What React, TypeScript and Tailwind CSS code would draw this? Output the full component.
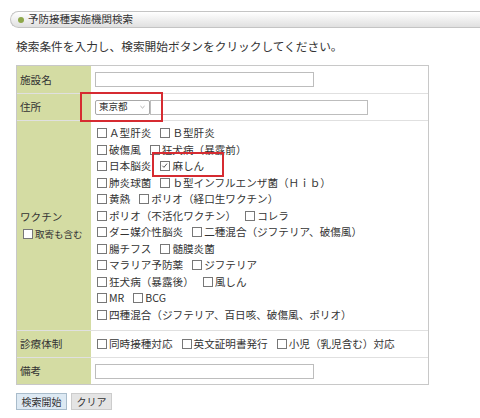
import React from "react";

const Box = ({ checked }: { checked?: boolean }) => (
  <span className="relative inline-block w-[10px] h-[10px] border border-[#777] bg-white mr-[2px] shrink-0">
    {checked && (
      <svg viewBox="0 0 9 9" className="absolute left-0 top-0 w-[8px] h-[8px]">
        <path d="M1.5 4.2 L3.3 6 L6.8 1.8" fill="none" stroke="#444" strokeWidth="1" />
      </svg>
    )}
  </span>
);

const Item = ({ label, checked }: { label: string; checked?: boolean }) => (
  <span className="inline-flex items-center whitespace-nowrap mr-[9px]">
    <Box checked={checked} />
    {label}
  </span>
);

const lines: { label: string; checked?: boolean }[][] = [
  [{ label: "Ａ型肝炎" }, { label: "Ｂ型肝炎" }],
  [{ label: "破傷風" }, { label: "狂犬病（暴露前）" }],
  [{ label: "日本脳炎" }, { label: "麻しん", checked: true }],
  [{ label: "肺炎球菌" }, { label: "ｂ型インフルエンザ菌（Ｈｉｂ）" }],
  [{ label: "黄熱" }, { label: "ポリオ（経口生ワクチン）" }],
  [{ label: "ポリオ（不活化ワクチン）" }, { label: "コレラ" }],
  [{ label: "ダニ媒介性脳炎" }, { label: "二種混合（ジフテリア、破傷風）" }],
  [{ label: "腸チフス" }, { label: "髄膜炎菌" }],
  [{ label: "マラリア予防薬" }, { label: "ジフテリア" }],
  [{ label: "狂犬病（暴露後）" }, { label: "風しん" }],
  [{ label: "MR" }, { label: "BCG" }],
  [{ label: "四種混合（ジフテリア、百日咳、破傷風、ポリオ）" }],
];

export default function App() {
  return (
    <div className="relative w-[480px] h-[418px] overflow-hidden bg-white text-[#333] font-['Noto_Sans_CJK_JP','Noto_Sans',sans-serif]">
      <div className="pt-[11px] pl-[10px]">
        <div className="h-[17px] rounded-l-[9px] border border-r-0 border-[#c4c4c4] bg-gradient-to-b from-white to-[#e0e0e0] flex items-center pl-[7px] gap-[4px]">
          <span className="w-[6px] h-[6px] rounded-full bg-[#8ea84a]" />
          <span className="text-[10.5px] leading-none">予防接種実施機関検索</span>
        </div>
      </div>

      <p className="mt-[11px] ml-[16px] text-[11.7px] leading-[14px]">
        検索条件を入力し、検索開始ボタンをクリックしてください。
      </p>

      <div className="mt-[12px] ml-[16px] w-[413px] border border-[#c8c8c8] text-[10.6px]">
        <div className="flex h-[28px] border-b border-[#e0e0e0]">
          <div className="w-[74px] bg-[#d4dca3] flex items-center pl-[3px]">施設名</div>
          <div className="flex-1 flex items-center pl-[4px]">
            <div className="w-[219px] h-[15px] border border-[#bdbdbd] bg-white" />
          </div>
        </div>
        <div className="flex h-[27px] border-b border-[#e0e0e0]">
          <div className="w-[74px] bg-[#d4dca3] flex items-center pl-[3px]">住所</div>
          <div className="flex-1 flex items-center pl-[4px]">
            <div className="w-[55px] h-[15px] border border-[#a8a8a8] rounded-[2px] bg-white flex items-center justify-between pl-[3px] pr-[4px] text-[9.5px] leading-none">
              <span>東京都</span>
              <svg viewBox="0 0 6 4" className="w-[5px] h-[4px]">
                <path d="M0.5 0.8 L3 3.2 L5.5 0.8" fill="none" stroke="#888" strokeWidth="0.8" />
              </svg>
            </div>
            <div className="w-[218px] h-[15px] border border-[#bdbdbd] bg-white" />
          </div>
        </div>
        <div className="flex h-[210px] border-b border-[#e0e0e0]">
          <div className="w-[74px] bg-[#d4dca3] flex flex-col justify-center pl-[3px]">
            <div className="h-[16.5px] leading-[16.5px]">ワクチン</div>
            <div className="h-[16.5px] flex items-center pl-[3px]">
              <Box />
              <span className="text-[9.5px]">取寄も含む</span>
            </div>
          </div>
          <div className="flex-1 flex flex-col pl-[6px] pt-[4px]">
            {lines.map((line, i) => (
              <div key={i} className="h-[16.5px] flex items-center">
                {line.map((it) => (
                  <Item key={it.label} label={it.label} checked={it.checked} />
                ))}
              </div>
            ))}
          </div>
        </div>
        <div className="flex h-[27px] border-b border-[#e0e0e0]">
          <div className="w-[74px] bg-[#d4dca3] flex items-center pl-[3px]">診療体制</div>
          <div className="flex-1 flex items-center pl-[6px]">
            <Item label="同時接種対応" />
            <Item label="英文証明書発行" />
            <Item label="小児（乳児含む）対応" />
          </div>
        </div>
        <div className="flex h-[26px]">
          <div className="w-[74px] bg-[#d4dca3] flex items-center pl-[3px]">備考</div>
          <div className="flex-1 flex items-center pl-[4px]">
            <div className="w-[219px] h-[15px] border border-[#bdbdbd] bg-white" />
          </div>
        </div>
      </div>

      <div className="mt-[8px] ml-[16px] flex gap-[4px] text-[10px]">
        <button className="w-[51px] h-[17px] border border-[#a9bccb] bg-[#dde9f3] leading-none">検索開始</button>
        <button className="w-[41px] h-[17px] border border-[#cccccc] bg-[#e4e4e4] leading-none">クリア</button>
      </div>

      <div className="absolute left-[80px] top-[92px] w-[83px] h-[30px] border-2 border-[#d62b31]" />
      <div className="absolute left-[152px] top-[152px] w-[72px] h-[25px] border-2 border-[#d62b31]" />
    </div>
  );
}
